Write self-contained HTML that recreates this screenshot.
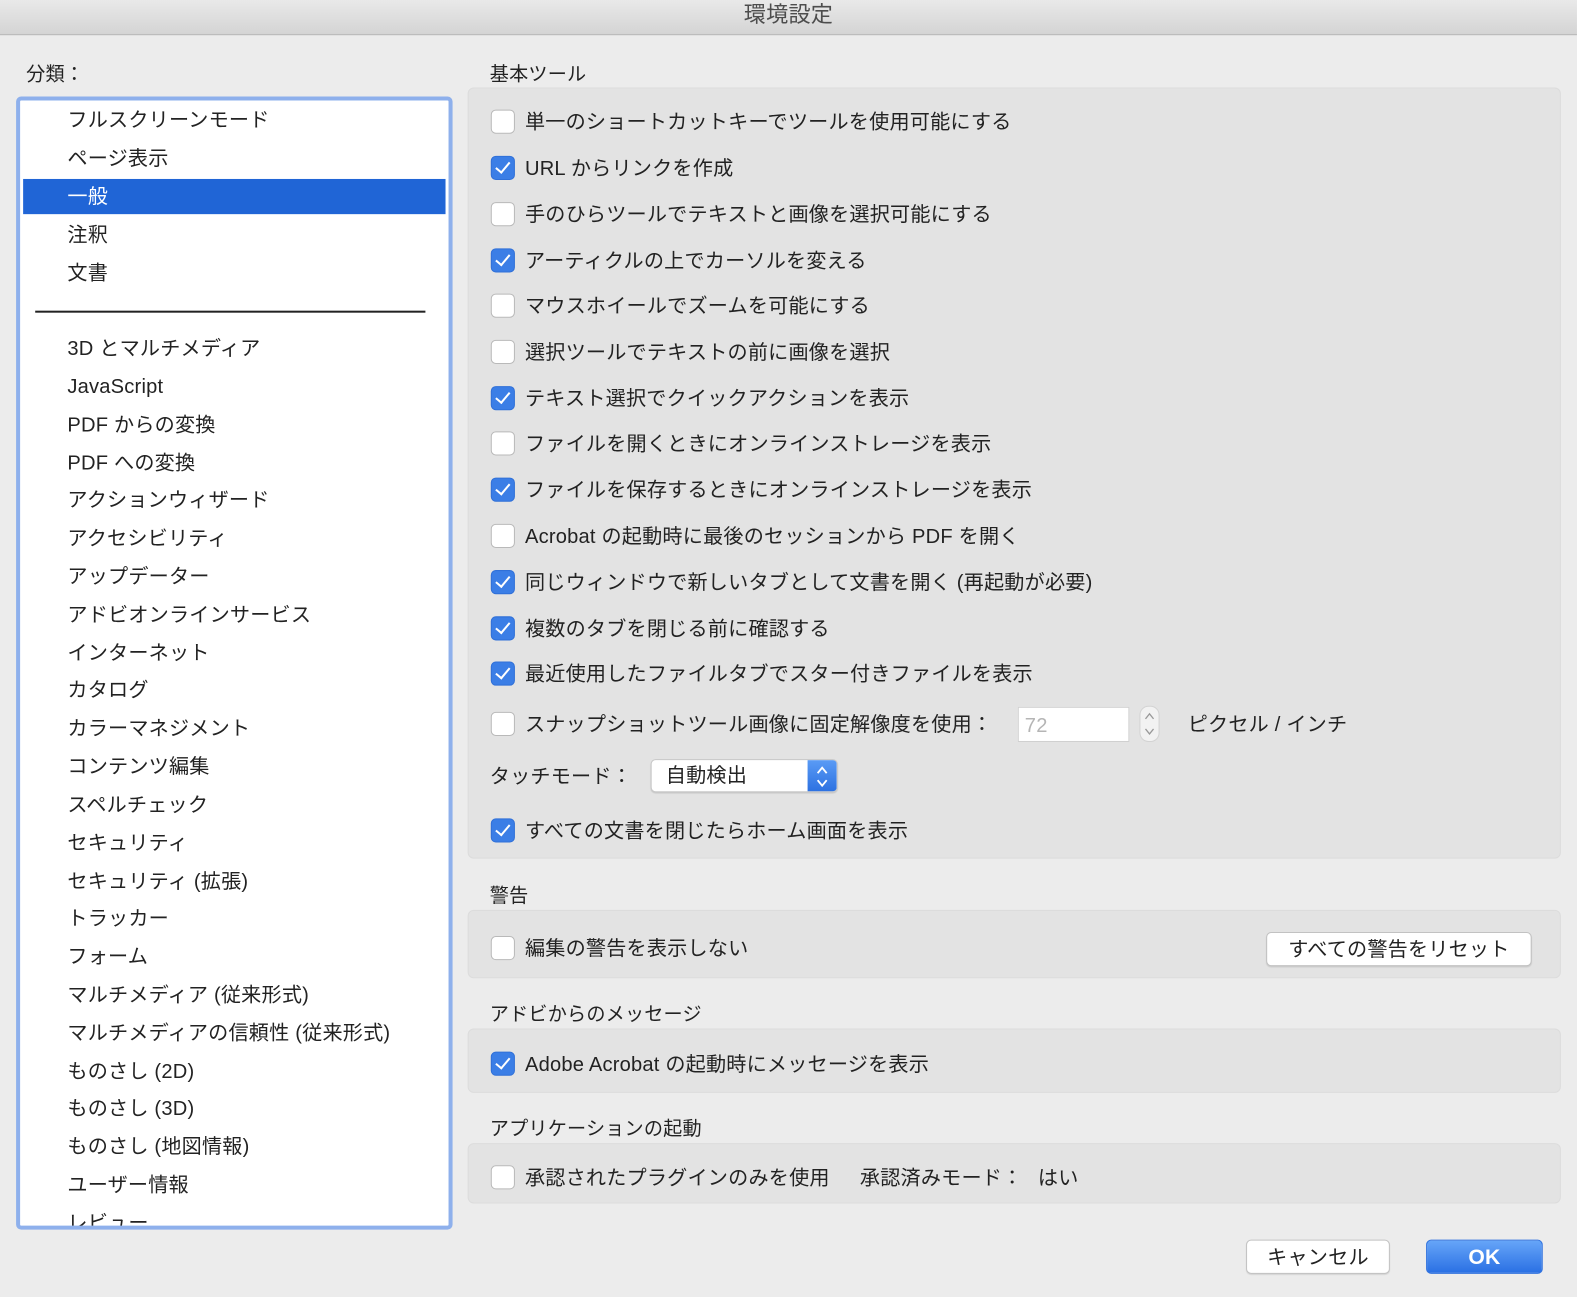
<!DOCTYPE html>
<html><head><meta charset="utf-8"><style>
*{margin:0;padding:0;box-sizing:border-box}
html,body{width:1577px;height:1297px;overflow:hidden;background:#ececec}
#w{position:absolute;left:0;top:0;width:1568px;height:1290px;transform:scale(1.0057,1.0054);transform-origin:0 0;font-family:"Liberation Sans","Noto Sans CJK JP",sans-serif;color:#222;font-size:20px;letter-spacing:.2px}
.a{position:absolute;white-space:nowrap;line-height:1;margin-top:1px}
#tb{position:absolute;left:0;top:0;width:1568px;height:35px;background:linear-gradient(#e9e9e9,#d4d4d4);border-bottom:1px solid #b3b3b3}
#list{position:absolute;left:16px;top:96px;width:434px;height:1127px;border:4px solid #8eb0ec;border-radius:5px;background:#fff;overflow:hidden}
#list .it{position:absolute;left:47px;font-size:20px;line-height:1;white-space:nowrap;margin-top:1px}
.pn{position:absolute;left:465px;width:1087px;background:#e3e3e3;border:1px solid #dcdcdc;border-radius:6px}
.cb{position:absolute;left:488px;width:24px;height:24px;border-radius:5px;background:#fff;border:1px solid #b9b9b9}
.cb.on{background:#3b7ee6;border-color:#3070d8}
.cb.on::after{content:"";position:absolute;left:7px;top:2px;width:6px;height:12px;border:solid #fff;border-width:0 2.5px 2.5px 0;transform:rotate(40deg)}
.btn{position:absolute;background:#fff;border:1px solid #c2c2c2;border-radius:5px;text-align:center;box-shadow:0 1px 1px rgba(0,0,0,.1)}
</style></head><body><div id="w">
<div id="tb"><div class="a" style="left:0;width:1568px;text-align:center;top:3px;font-size:22px;color:#4d4d4d">環境設定</div></div>
<div class="a" style="left:26px;top:64px;font-size:19px">分類：</div>
<div id="list">
<div style="position:absolute;left:3px;top:78px;width:420px;height:35px;background:#2065d6"></div>
<div class="it" style="top:9px">フルスクリーンモード</div>
<div class="it" style="top:47px">ページ表示</div>
<div class="it" style="top:85px;color:#fff">一般</div>
<div class="it" style="top:123px">注釈</div>
<div class="it" style="top:161px">文書</div>
<div style="position:absolute;left:15px;top:209px;width:388px;height:2px;background:#222"></div>
<div class="it" style="top:236px">3D とマルチメディア</div>
<div class="it" style="top:274px">JavaScript</div>
<div class="it" style="top:312px">PDF からの変換</div>
<div class="it" style="top:350px">PDF への変換</div>
<div class="it" style="top:387px">アクションウィザード</div>
<div class="it" style="top:425px">アクセシビリティ</div>
<div class="it" style="top:463px">アップデーター</div>
<div class="it" style="top:501px">アドビオンラインサービス</div>
<div class="it" style="top:539px">インターネット</div>
<div class="it" style="top:576px">カタログ</div>
<div class="it" style="top:614px">カラーマネジメント</div>
<div class="it" style="top:652px">コンテンツ編集</div>
<div class="it" style="top:690px">スペルチェック</div>
<div class="it" style="top:728px">セキュリティ</div>
<div class="it" style="top:766px">セキュリティ (拡張)</div>
<div class="it" style="top:803px">トラッカー</div>
<div class="it" style="top:841px">フォーム</div>
<div class="it" style="top:879px">マルチメディア (従来形式)</div>
<div class="it" style="top:917px">マルチメディアの信頼性 (従来形式)</div>
<div class="it" style="top:955px">ものさし (2D)</div>
<div class="it" style="top:992px">ものさし (3D)</div>
<div class="it" style="top:1030px">ものさし (地図情報)</div>
<div class="it" style="top:1068px">ユーザー情報</div>
<div class="it" style="top:1106px">レビュー</div>
</div>

<div class="a" style="left:487px;top:64px;font-size:19px">基本ツール</div>
<div class="pn" style="top:87px;height:767px"></div>
<div class="cb" style="top:109px"></div><div class="a" style="left:522px;top:111px">単一のショートカットキーでツールを使用可能にする</div>
<div class="cb on" style="top:155px"></div><div class="a" style="left:522px;top:157px">URL からリンクを作成</div>
<div class="cb" style="top:201px"></div><div class="a" style="left:522px;top:203px">手のひらツールでテキストと画像を選択可能にする</div>
<div class="cb on" style="top:247px"></div><div class="a" style="left:522px;top:249px">アーティクルの上でカーソルを変える</div>
<div class="cb" style="top:292px"></div><div class="a" style="left:522px;top:294px">マウスホイールでズームを可能にする</div>
<div class="cb" style="top:338px"></div><div class="a" style="left:522px;top:340px">選択ツールでテキストの前に画像を選択</div>
<div class="cb on" style="top:384px"></div><div class="a" style="left:522px;top:386px">テキスト選択でクイックアクションを表示</div>
<div class="cb" style="top:429px"></div><div class="a" style="left:522px;top:431px">ファイルを開くときにオンラインストレージを表示</div>
<div class="cb on" style="top:475px"></div><div class="a" style="left:522px;top:477px">ファイルを保存するときにオンラインストレージを表示</div>
<div class="cb" style="top:521px"></div><div class="a" style="left:522px;top:523px">Acrobat の起動時に最後のセッションから PDF を開く</div>
<div class="cb on" style="top:567px"></div><div class="a" style="left:522px;top:569px">同じウィンドウで新しいタブとして文書を開く (再起動が必要)</div>
<div class="cb on" style="top:613px"></div><div class="a" style="left:522px;top:615px">複数のタブを閉じる前に確認する</div>
<div class="cb on" style="top:658px"></div><div class="a" style="left:522px;top:660px">最近使用したファイルタブでスター付きファイルを表示</div>
<div class="cb" style="top:708px"></div><div class="a" style="left:522px;top:710px">スナップショットツール画像に固定解像度を使用：</div>
<div style="position:absolute;left:1012px;top:703px;width:111px;height:35px;background:#fff;border:1px solid #d0d0d0"></div>
<div class="a" style="left:1019px;top:711px;color:#b5b5b5">72</div>
<div style="position:absolute;left:1133px;top:702px;width:20px;height:36px;border:1px solid #d3d3d3;border-radius:9px;background:#f2f2f2">
<svg width="18" height="34" style="position:absolute;left:0;top:0"><path d="M5 12 L9 7 L13 12 M5 22 L9 27 L13 22" fill="none" stroke="#999" stroke-width="1.3"/></svg></div>
<div class="a" style="left:1181px;top:710px">ピクセル / インチ</div>
<div class="a" style="left:487px;top:762px">タッチモード：</div>
<div style="position:absolute;left:647px;top:755px;width:186px;height:33px;background:#fff;border:1px solid #c8c8c8;border-radius:5px;overflow:hidden;box-shadow:0 1px 1px rgba(0,0,0,.12)">
<div style="position:absolute;right:0;top:0;width:29px;height:33px;background:linear-gradient(#5a9bf5,#2a6fe0)">
<svg width="29" height="33" style="position:absolute;left:0;top:0"><path d="M10 13 L14.5 7.5 L19 13 M10 20 L14.5 25.5 L19 20" fill="none" stroke="#fff" stroke-width="1.8"/></svg></div></div>
<div class="a" style="left:662px;top:761px">自動検出</div>
<div class="cb on" style="top:814px"></div><div class="a" style="left:522px;top:816px">すべての文書を閉じたらホーム画面を表示</div>

<div class="a" style="left:487px;top:881px;font-size:19px">警告</div>
<div class="pn" style="top:905px;height:68px"></div>
<div class="cb" style="top:931px"></div><div class="a" style="left:522px;top:933px">編集の警告を表示しない</div>
<div class="btn" style="left:1259px;top:927px;width:264px;height:34px"></div>
<div class="a" style="left:1259px;width:264px;text-align:center;top:934px">すべての警告をリセット</div>

<div class="a" style="left:487px;top:999px;font-size:19px">アドビからのメッセージ</div>
<div class="pn" style="top:1023px;height:64px"></div>
<div class="cb on" style="top:1046px"></div><div class="a" style="left:522px;top:1048px">Adobe Acrobat の起動時にメッセージを表示</div>

<div class="a" style="left:487px;top:1113px;font-size:19px">アプリケーションの起動</div>
<div class="pn" style="top:1137px;height:60px"></div>
<div class="cb" style="top:1159px"></div><div class="a" style="left:522px;top:1161px">承認されたプラグインのみを使用</div>
<div class="a" style="left:855px;top:1161px">承認済みモード：</div>
<div class="a" style="left:1032px;top:1161px">はい</div>

<div class="btn" style="left:1239px;top:1233px;width:143px;height:34px"></div>
<div class="a" style="left:1239px;width:143px;text-align:center;top:1240px">キャンセル</div>
<div style="position:absolute;left:1418px;top:1233px;width:116px;height:34px;border-radius:5px;background:linear-gradient(#66a5f8,#2a70e4);border:1px solid #3273de"></div>
<div class="a" style="left:1418px;width:116px;text-align:center;top:1239px;color:#fff;font-size:21px;font-weight:bold">OK</div>
</div></body></html>
